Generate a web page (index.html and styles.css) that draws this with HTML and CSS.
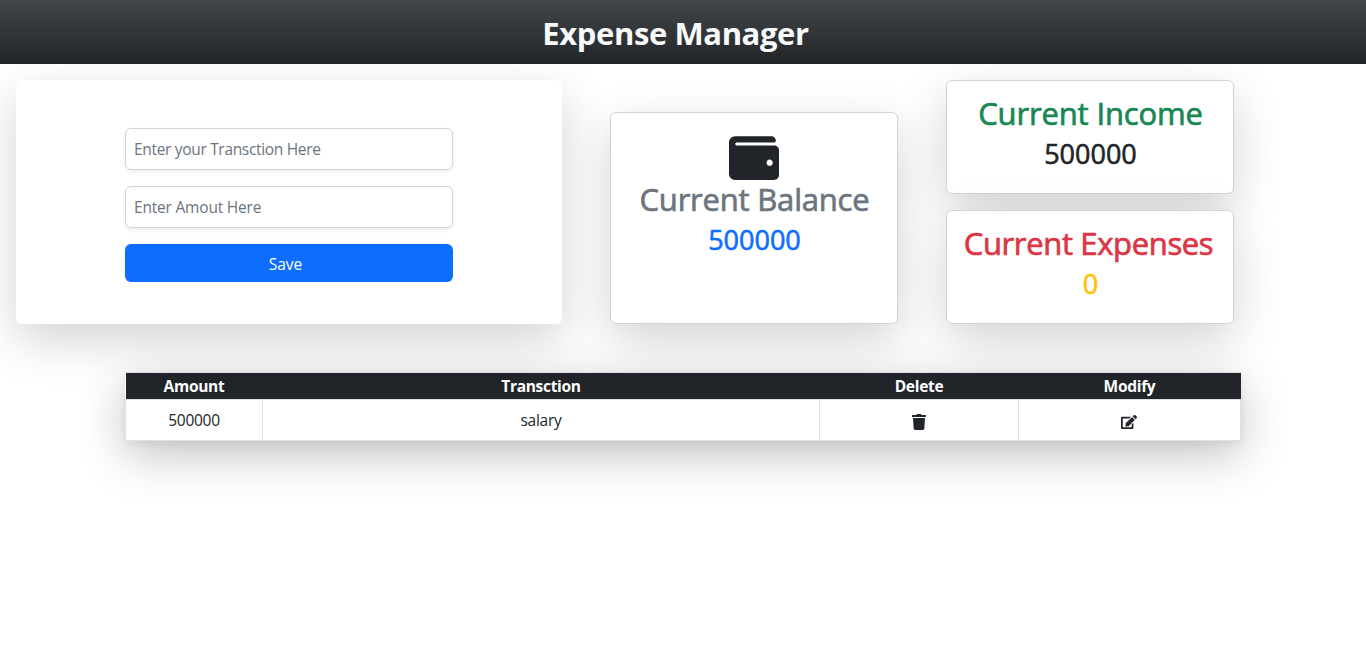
FILE: index.html
```html
<!DOCTYPE html>
<html lang="en">
<head>
<meta charset="utf-8">
<title>Expense Manager</title>
<link rel="stylesheet" href="styles.css">
</head>
<body>
<header class="header"><h1 class="brand">Expense Manager</h1></header>
<main>
  <section class="top">
    <form class="entry">
      <input class="field field-name" type="text" placeholder="Enter your Transction Here">
      <input class="field field-amount" type="text" placeholder="Enter Amout Here">
      <button class="save" type="button">Save</button>
    </form>
    <div class="card balance">
      <svg class="wallet" viewBox="0 0 512 448" aria-hidden="true"><path fill="currentColor" d="M461.200 96H80c-8.840 0-16-7.160-16-16s7.160-16 16-16h384c8.840 0 16-7.160 16-16 0-26.510-21.490-48-48-48H64C28.650 0 0 28.650 0 64v320c0 35.350 28.650 64 64 64h397.200c28.020 0 50.800-21.530 50.800-48V144c0-26.470-22.780-48-50.800-48zM416 304c-17.670 0-32-14.330-32-32s14.330-32 32-32 32 14.330 32 32-14.330 32-32 32z"/></svg>
      <h2 class="title title-balance">Current Balance</h2>
      <p class="value value-balance">500000</p>
    </div>
    <div class="totals">
      <div class="card total">
        <h2 class="title title-income">Current Income</h2>
        <p class="value">500000</p>
      </div>
      <div class="card total">
        <h2 class="title title-expenses">Current Expenses</h2>
        <p class="value value-expenses">0</p>
      </div>
    </div>
  </section>
  <table class="records">
    <colgroup><col class="col-amount"><col class="col-name"><col class="col-delete"><col class="col-modify"></colgroup>
    <thead><tr><th>Amount</th><th>Transction</th><th>Delete</th><th>Modify</th></tr></thead>
    <tbody><tr>
      <td>500000</td>
      <td>salary</td>
      <td><svg class="icon trash" viewBox="0 0 448 512" aria-label="Delete"><path fill="currentColor" d="M432 32H312l-9.400-18.700A24 24 0 0 0 281.100 0H166.800a23.700 23.700 0 0 0-21.400 13.300L136 32H16A16 16 0 0 0 0 48v32a16 16 0 0 0 16 16h416a16 16 0 0 0 16-16V48a16 16 0 0 0-16-16zM53.200 467a48 48 0 0 0 47.900 45h245.800a48 48 0 0 0 47.900-45L416 128H32z"/></svg></td>
      <td><svg class="icon edit" viewBox="0 0 576 512" aria-label="Modify"><path fill="currentColor" d="M402.600 83.200l90.200 90.200c3.800 3.800 3.800 10 0 13.800L274.400 405.600l-92.800 10.300c-12.400 1.400-22.900-9.100-21.500-21.500l10.300-92.800L388.800 83.200c3.800-3.800 10-3.800 13.800 0zm162-22.900l-48.800-48.800c-15.200-15.200-39.900-15.200-55.200 0l-35.400 35.400c-3.800 3.800-3.800 10 0 13.800l90.200 90.200c3.800 3.800 10 3.800 13.800 0l35.400-35.400c15.200-15.300 15.200-40 0-55.200zM384 346.200V448H64V128h229.800c3.200 0 6.200-1.300 8.500-3.500l40-40c7.600-7.600 2.200-20.500-8.500-20.500H48C21.500 64 0 85.500 0 112v352c0 26.500 21.500 48 48 48h352c26.500 0 48-21.500 48-48V306.200c0-10.700-12.900-16-20.500-8.500l-40 40c-2.200 2.300-3.500 5.300-3.500 8.500z"/></svg></td>
    </tr></tbody>
  </table>
</main>
</body>
</html>
```
FILE: styles.css
```css
* { box-sizing: border-box; }
body { margin: 0; min-height: 100vh; background: #fff; color: #212529; font: 15.5px/24px "Open Sans", sans-serif; }
h1, h2, p { margin: 0; }

.header { position: relative; z-index: 1; height: 64px; padding: 14px 15px 0 0; background: linear-gradient(#424649, #212529); text-align: center; }
.brand { font-size: 31px; line-height: 38px; font-weight: 700; letter-spacing: -.4px; color: #f8f9fa; }

.top { display: flex; align-items: flex-end; gap: 48px; padding: 16px 16px 0; }
.entry { display: flex; flex-direction: column; align-items: center; gap: 16px; width: 546px; height: 244px; padding-top: 48px; border-radius: 6px; box-shadow: 0 16px 48px rgba(0, 0, 0, .175); background: #fff; }
.field { width: 328px; height: 42px; padding: 0 8px; border: 1px solid #ced4da; border-radius: 6px; background: #fff; box-shadow: 0 2px 4px rgba(0, 0, 0, .075); font: inherit; letter-spacing: -.32px; color: #212529; }
.field-amount { letter-spacing: -.2px; }
.field::placeholder { color: #6c757d; opacity: 1; }
.save { width: 328px; height: 38px; padding: 1px 7px 0 0; border: 0; border-radius: 6px; background: #0d6efd; color: #fff; font: inherit; }

.card { display: flex; flex-direction: column; align-items: center; width: 288px; border: 1px solid #d2d3d4; border-radius: 6px; background: #fff; box-shadow: 0 16px 48px rgba(0, 0, 0, .175); white-space: nowrap; }
.balance { height: 212px; padding-top: 23px; }
.wallet { width: 50px; height: 44px; }
.title { font-size: 31px; line-height: 38px; margin-bottom: 2px; padding-left: 1px; font-weight: 500; letter-spacing: -.2px; -webkit-text-stroke: .7px currentColor; }
.title-balance { color: #6c757d; }
.title-income { letter-spacing: -.15px; color: #198754; }
.title-expenses { padding: 0 3px 0 0; letter-spacing: -.35px; color: #dc3545; }
.value { padding-left: 1px; font-size: 27px; line-height: 40px; font-weight: 500; -webkit-text-stroke: .6px currentColor; }
.value-balance { color: #0d6efd; }
.value-expenses { color: #ffc107; }
.totals { display: flex; flex-direction: column; gap: 16px; }
.total { height: 114px; padding-top: 13px; }

.records { width: 1116px; margin: 48px 0 0 125px; table-layout: fixed; border-collapse: collapse; text-align: center; box-shadow: 0 14px 48px rgba(0, 0, 0, .24), 0 3px 8px rgba(0, 0, 0, .06); }
.col-amount { width: 137px; }
.col-name { width: 557px; }
.col-delete { width: 199px; }
.col-modify { width: 222px; }
.records th, .records td { padding: 0; border: 1px solid #dee2e6; }
.records th { height: 27px; border-width: 1px 0; background: #212529; color: #fff; font-weight: 700; letter-spacing: -.3px; }
.records td { height: 41px; background: #fff; letter-spacing: -.25px; }
.icon { display: inline-block; height: 16px; vertical-align: -4px; }
.trash { width: 14px; }
.edit { width: 16px; margin-right: 2px; }
```
